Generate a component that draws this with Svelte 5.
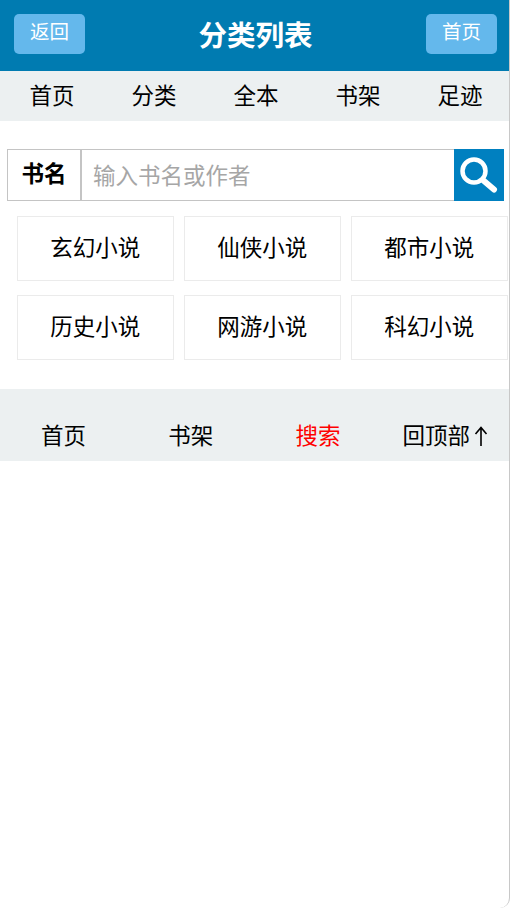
<script>
  const navLinks = ["首页", "分类", "全本", "书架", "足迹"];
  const categories = ["玄幻小说", "仙侠小说", "都市小说", "历史小说", "网游小说", "科幻小说"];
  const footLinks = [
    { label: "首页" },
    { label: "书架" },
    { label: "搜索", active: true },
    { label: "回顶部", arrow: true },
  ];
</script>

<div class="page">
  <header class="top">
    <a class="btn" href="#back">返回</a>
    <h1>分类列表</h1>
    <a class="btn" href="#home">首页</a>
  </header>

  <nav class="nav">
    {#each navLinks as link}
      <a href="#nav">{link}</a>
    {/each}
  </nav>

  <form class="search">
    <span class="label">书名</span>
    <input type="text" placeholder="输入书名或作者" />
    <button type="button" aria-label="搜索">
      <svg width="50" height="52" viewBox="0 0 50 52" fill="none" stroke="#fff">
        <circle cx="20" cy="22" r="11.5" stroke-width="4.5" />
        <path d="M30 32l10 8.5" stroke-width="6" stroke-linecap="round" />
      </svg>
    </button>
  </form>

  <div class="cats">
    {#each categories as cat}
      <a href="#cat">{cat}</a>
    {/each}
  </div>

  <footer class="foot">
    {#each footLinks as link}
      <a href="#foot" class:active={link.active}>
        {link.label}{#if link.arrow}<svg class="arrow" width="14" height="20" viewBox="0 0 14 20" fill="none" stroke="#000" stroke-width="1.6"><path d="M7 20V1.5M1.5 8L7 1.5 12.5 8" /></svg>{/if}
      </a>
    {/each}
  </footer>
</div>

<style>
  :global(body) {
    background: #fff;
    font-family: "Noto Sans CJK SC", "Liberation Sans", sans-serif;
  }

  a {
    color: #000;
    text-decoration: none;
  }

  .page {
    box-sizing: border-box;
    width: 510px;
    height: 908px;
    border-right: 1px solid #c8c8c8;
    border-bottom-right-radius: 10px;
    border-bottom-left-radius: 10px;
  }

  .top {
    display: flex;
    justify-content: space-between;
    align-items: center;
    height: 71px;
    padding: 0 12px 3px 14px;
    box-sizing: border-box;
    background: #007bb1;
  }

  .top h1 {
    margin: 0;
    color: #fff;
    font-size: 28.5px;
    font-weight: 700;
    line-height: 40px;
  }

  .btn {
    width: 71px;
    height: 40px;
    border-radius: 5px;
    background: #64b8ec;
    color: #fff;
    font-size: 19.5px;
    line-height: 33px;
    text-align: center;
  }

  .nav {
    display: grid;
    grid-template-columns: repeat(5, 102px);
    height: 50px;
    padding-left: 1px;
    background: #ecf0f1;
  }

  .nav a {
    font-size: 22.5px;
    line-height: 46px;
    text-align: center;
  }

  .search {
    display: flex;
    height: 52px;
    margin: 28px 5px 15px 7px;
  }

  .label {
    box-sizing: border-box;
    width: 75px;
    border: solid #c4c4c4;
    border-width: 1px 2px 1px 1px;
    font-size: 22.5px;
    font-weight: 700;
    line-height: 45px;
    text-align: center;
  }

  input {
    flex: 1;
    min-width: 0;
    box-sizing: border-box;
    padding: 0 11px 3px;
    border: solid #c4c4c4;
    border-width: 1px 0;
    border-radius: 0;
    outline: none;
    font: inherit;
    font-size: 22.5px;
  }

  input::placeholder {
    color: #a6a6a6;
    opacity: 1;
  }

  button {
    display: flex;
    width: 50px;
    padding: 0;
    border: 0;
    background: #0080c0;
  }

  .cats {
    display: grid;
    grid-template-columns: repeat(3, 156.6px);
    grid-auto-rows: 65px;
    gap: 14px 10.4px;
    margin: 0 0 29px 17px;
  }

  .cats a {
    box-sizing: border-box;
    border: 1px solid #ebebeb;
    font-size: 22.5px;
    line-height: 58px;
    text-align: center;
  }

  .foot {
    display: grid;
    grid-template-columns: repeat(4, 1fr);
    height: 72px;
    background: #ecf0f1;
  }

  .foot a {
    font-size: 22.5px;
    line-height: 90px;
    height: 72px;
    overflow: hidden;
    text-align: center;
    white-space: nowrap;
  }

  .foot a.active {
    color: #f00;
  }

  .arrow {
    margin-left: 4px;
    vertical-align: -2px;
  }
</style>
